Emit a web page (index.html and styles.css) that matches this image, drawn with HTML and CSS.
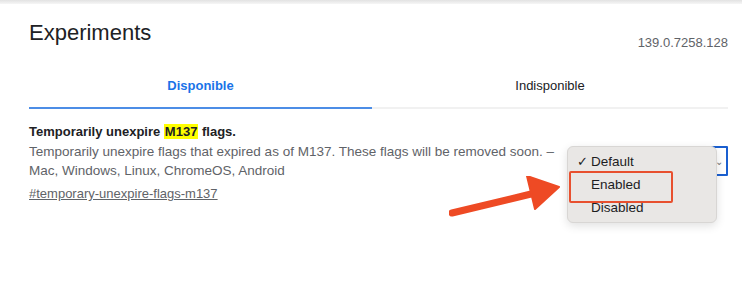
FILE: index.html
```html
<!DOCTYPE html>
<html>
<head>
<meta charset="utf-8">
<link rel="stylesheet" href="styles.css">
</head>
<body>
<div class="topbar"></div>
<div class="page">
  <div class="header">
    <h1 class="title">Experiments</h1>
    <span class="version">139.0.7258.128</span>
  </div>
  <div class="tabs">
    <div class="tab tab-active">Disponible</div>
    <div class="tab">Indisponible</div>
  </div>
  <div class="flag">
    <div class="flag-body">
      <div class="flag-name">Temporarily unexpire <mark class="hl">M137</mark> flags.</div>
      <div class="flag-desc">Temporarily unexpire flags that expired as of M137. These flags will be removed soon. – Mac, Windows, Linux, ChromeOS, Android</div>
      <a class="flag-link">#temporary-unexpire-flags-m137</a>
    </div>
    <div class="select"><span class="chev">⌄</span></div>
  </div>
</div>
<div class="popup">
  <div class="opt"><span class="check">✓</span>Default</div>
  <div class="opt">Enabled</div>
  <div class="opt">Disabled</div>
</div>
<div class="redbox"></div>
<svg class="arrow" width="120" height="45" viewBox="0 0 120 45">
  <path d="M3 37 L82 18" stroke="#ee4a24" stroke-width="7" stroke-linecap="round" fill="none"/>
  <path d="M78 0 L110 11 L86 33 Z" fill="#ee4a24" stroke="#ee4a24" stroke-width="2" stroke-linejoin="round"/>
</svg>
</body>
</html>
```
FILE: styles.css
```css
html, body {
  margin: 0;
  padding: 0;
  background: #fff;
  font-family: "Liberation Sans", Arial, sans-serif;
}
.topbar {
  height: 4px;
  background: linear-gradient(#e2e2e2, #f6f6f6);
}
.page {
  padding: 0 14px 0 29px;
}
.header {
  display: flex;
  justify-content: space-between;
  align-items: flex-end;
  height: 48px;
}
.title {
  margin: 0;
  font-weight: 400;
  font-size: 22px;
  color: #202124;
  line-height: 26px;
  padding-bottom: 6px;
}
.version {
  font-size: 13px;
  color: #5f6368;
  line-height: 16px;
  margin-bottom: 1px;
}
.tabs {
  display: flex;
  margin-top: 21px;
  width: 699px;
}
.tab {
  height: 36px;
  display: flex;
  align-items: center;
  justify-content: center;
  font-size: 13px;
  color: #202124;
  border-bottom: 2px solid #f1f1f1;
  box-sizing: border-box;
  flex: 1;
  padding-bottom: 9px;
}
.tab-active {
  flex: 0 0 343px;
  color: #1a73e8;
  font-weight: 700;
  border-bottom: 2px solid #4c8de6;
}
.flag {
  display: flex;
  align-items: flex-start;
  margin-top: 14px;
}
.flag-body {
  width: 545px;
}
.flag-name {
  font-size: 13px;
  font-weight: 700;
  color: #202124;
  line-height: 18px;
}
.hl {
  background: #ffff00;
  color: #202124;
  padding: 0 1px;
}
.flag-desc {
  font-size: 13.5px;
  color: #5f6368;
  line-height: 19px;
  margin-top: 1px;
}
.flag-link {
  display: inline-block;
  font-size: 13px;
  color: #5f6368;
  text-decoration: underline;
  line-height: 19px;
  margin-top: 4px;
}
.select {
  margin-left: auto;
  margin-top: 23px;
  width: 150px;
  height: 30px;
  box-sizing: border-box;
  border: 2px solid #1a5fd0;
  border-radius: 1px;
  display: flex;
  justify-content: flex-end;
  align-items: center;
  padding-right: 3px;
}
.chev {
  font-size: 10px;
  color: #777;
}
.popup {
  position: absolute;
  left: 567px;
  top: 146px;
  width: 150px;
  height: 77px;
  box-sizing: border-box;
  background: #e9e7e5;
  border: 1px solid #d8d6d4;
  border-radius: 6px;
  box-shadow: 0 3px 10px rgba(0,0,0,0.12);
  padding-top: 3px;
}
.opt {
  position: relative;
  height: 23px;
  line-height: 23px;
  font-size: 13.5px;
  color: #1d1d1f;
  padding-left: 23px;
}
.check {
  position: absolute;
  left: 9px;
  font-size: 13px;
}
.redbox {
  position: absolute;
  left: 569px;
  top: 171px;
  width: 104px;
  height: 32px;
  box-sizing: border-box;
  border: 2.5px solid #e8502f;
  border-radius: 2px;
}
.arrow {
  position: absolute;
  left: 449px;
  top: 176px;
}
```
